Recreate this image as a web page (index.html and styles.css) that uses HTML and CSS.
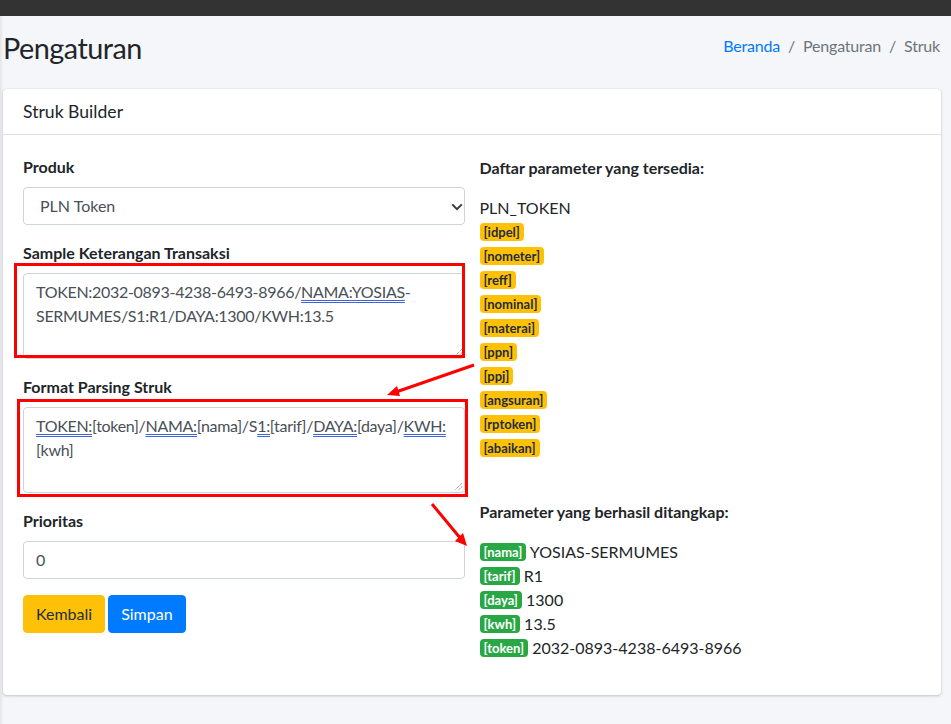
FILE: index.html
```html
<!DOCTYPE html>
<html lang="id">
<head>
<meta charset="utf-8">
<title>Pengaturan - Struk Builder</title>
<link rel="stylesheet" href="styles.css">
</head>
<body>
<div class="topbar"></div>
<div class="content-header">
  <h1 class="page-title">Pengaturan</h1>
  <ol class="breadcrumb">
    <li class="crumb"><a href="#" class="crumb-link">Beranda</a></li>
    <li class="crumb crumb-sep">Pengaturan</li>
    <li class="crumb crumb-sep">Struk</li>
  </ol>
</div>

<div class="card">
  <div class="card-header">
    <h3 class="card-title">Struk Builder</h3>
  </div>
  <div class="card-body">
    <div class="form-col">
      <div class="form-group">
        <label class="form-label">Produk</label>
        <div class="select-wrap">
          <select class="form-control select">
            <option>PLN Token</option>
          </select>
          <svg class="select-caret" width="12" height="8" viewBox="0 0 12 8"><path d="M1.2 1.4 L6 6.2 L10.8 1.4" fill="none" stroke="#3a3a3a" stroke-width="2"/></svg>
        </div>
      </div>
      <div class="form-group">
        <label class="form-label">Sample Keterangan Transaksi</label>
        <div class="form-control textarea">TOKEN:2032-0893-4238-6493-8966/<span class="sp">NAMA:YOSIAS</span>-<br>SERMUMES/S1:R1/DAYA:1300/KWH:13.5<svg class="grip" width="9" height="9" viewBox="0 0 9 9"><path d="M8 1 L1 8 M8 4.5 L4.5 8" stroke="#8a8a8a" stroke-width="1" stroke-dasharray="1.2 0.8"/></svg></div>
      </div>
      <div class="form-group">
        <label class="form-label">Format Parsing Struk</label>
        <div class="form-control textarea"><span class="sp">TOKEN:[</span>token]/<span class="sp">NAMA:[</span>nama]/S<span class="sp">1:[</span>tarif]/<span class="sp">DAYA:[</span>daya]/<span class="sp">KWH:</span><br><span class="sp">[</span>kwh]<svg class="grip" width="9" height="9" viewBox="0 0 9 9"><path d="M8 1 L1 8 M8 4.5 L4.5 8" stroke="#8a8a8a" stroke-width="1" stroke-dasharray="1.2 0.8"/></svg></div>
      </div>
      <div class="form-group">
        <label class="form-label">Prioritas</label>
        <input class="form-control input" type="text" value="0">
      </div>
      <div class="actions">
        <button class="btn btn-warning">Kembali</button>
        <button class="btn btn-primary">Simpan</button>
      </div>
    </div>

    <div class="param-col">
      <div class="param-title">Daftar parameter yang tersedia:</div>
      <div class="param-line">PLN_TOKEN</div>
      <div class="param-line"><span class="badge badge-warning">[idpel]</span></div>
      <div class="param-line"><span class="badge badge-warning">[nometer]</span></div>
      <div class="param-line"><span class="badge badge-warning">[reff]</span></div>
      <div class="param-line"><span class="badge badge-warning">[nominal]</span></div>
      <div class="param-line"><span class="badge badge-warning">[materai]</span></div>
      <div class="param-line"><span class="badge badge-warning">[ppn]</span></div>
      <div class="param-line"><span class="badge badge-warning">[ppj]</span></div>
      <div class="param-line"><span class="badge badge-warning">[angsuran]</span></div>
      <div class="param-line"><span class="badge badge-warning">[rptoken]</span></div>
      <div class="param-line"><span class="badge badge-warning">[abaikan]</span></div>

      <div class="param-title param-title-2">Parameter yang berhasil ditangkap:</div>
      <div class="param-line"><span class="badge badge-success">[nama]</span> YOSIAS-SERMUMES</div>
      <div class="param-line"><span class="badge badge-success">[tarif]</span> R1</div>
      <div class="param-line"><span class="badge badge-success">[daya]</span> 1300</div>
      <div class="param-line"><span class="badge badge-success">[kwh]</span> 13.5</div>
      <div class="param-line"><span class="badge badge-success">[token]</span> 2032-0893-4238-6493-8966</div>
    </div>
  </div>
</div>

<div class="mark mark-1"></div>
<div class="mark mark-2"></div>
<svg class="annot" width="951" height="724" viewBox="0 0 951 724">
  <line x1="474" y1="365" x2="396" y2="392" stroke="#f00" stroke-width="3"/>
  <polygon points="387,395 400,396 397,386" fill="#f00"/>
  <line x1="432" y1="504" x2="461" y2="539" stroke="#f00" stroke-width="3"/>
  <polygon points="467,546 455,541 463,533" fill="#f00"/>
</svg>
</body>
</html>
```

FILE: styles.css
```css
* { box-sizing: border-box; }

html, body { margin: 0; padding: 0; }

body {
  width: 951px;
  min-height: 724px;
  background: linear-gradient(to right, #e2e4e7 0, #eef0f3 2px, #f4f6f9 4px) #f4f6f9;
  font-family: Lato, "Open Sans", sans-serif;
  font-size: 16px;
  line-height: 1.5;
  color: #212529;
  position: relative;
  overflow: hidden;
}

.topbar {
  height: 16px;
  background: #333333;
}

.content-header {
  display: flex;
  justify-content: space-between;
  align-items: center;
  padding: 15px 11px 23px 3px;
}

.page-title {
  margin: 0;
  font-size: 28.8px;
  font-weight: 400;
  line-height: 1.2;
  letter-spacing: -0.5px;
  color: #212529;
}

.breadcrumb {
  display: flex;
  list-style: none;
  margin: 0 0 4px;
  padding: 0;
  font-size: 16px;
  line-height: 1.5;
  letter-spacing: -0.2px;
}

.crumb { color: #6c757d; }

.crumb-sep::before {
  content: "/";
  padding: 0 8px;
  color: #6c757d;
}

.crumb-link {
  color: #007bff;
  text-decoration: none;
}

.card {
  margin: 0 10px 0 3px;
  background: #fff;
  border-radius: 4px;
  box-shadow: 0 0 1px rgba(0,0,0,.125), 0 1px 3px rgba(0,0,0,.2);
}

.card-header {
  padding: 12px 20px;
  border-bottom: 1px solid rgba(0,0,0,.125);
}

.card-title {
  margin: 0;
  font-size: 17.6px;
  font-weight: 400;
  line-height: 1.2;
  color: #212529;
}

.card-body {
  display: grid;
  grid-template-columns: minmax(0, 1fr) minmax(0, 1fr);
  column-gap: 15px;
  padding: 20px 20px 35px;
}

.form-group { margin-bottom: 16px; }

.form-label {
  display: block;
  margin-bottom: 8px;
  font-weight: 700;
  line-height: 24px;
}

.form-control {
  display: block;
  width: 100%;
  border: 1px solid #ced4da;
  border-radius: 4px;
  background: #fff;
  color: #495057;
  font-family: inherit;
  font-size: 16px;
  line-height: 1.5;
}

.select-wrap { position: relative; }

.select {
  height: 38px;
  padding: 6px 12px 6px 16px;
  appearance: none;
  -webkit-appearance: none;
}

.select-caret {
  position: absolute;
  right: 2px;
  top: 16px;
}

.textarea {
  position: relative;
  height: 86px;
  padding: 6px 12px;
  white-space: nowrap;
  overflow: hidden;
  letter-spacing: -0.3px;
}

.sp {
  text-decoration: underline double #3f63d6;
  text-decoration-thickness: 1px;
  text-underline-offset: 2px;
}

.grip {
  position: absolute;
  right: 1px;
  bottom: 1px;
}

.input {
  height: 38px;
  padding: 6px 12px;
}

.actions {
  display: flex;
  gap: 3px;
}

.btn {
  font-family: inherit;
  font-size: 16px;
  line-height: 1.5;
  padding: 6px 12px;
  border: 1px solid transparent;
  border-radius: 4px;
}

.btn-warning {
  background: #ffc107;
  border-color: #ffc107;
  color: #1f2d3d;
}

.btn-primary {
  background: #007bff;
  border-color: #007bff;
  color: #fff;
}

.param-col { padding-top: 1px; }

.param-title {
  font-weight: 700;
  line-height: 24px;
  margin-bottom: 16px;
}

.param-title-2 { margin-top: 40px; }

.param-line {
  line-height: 24px;
  height: 24px;
}

.badge {
  display: inline-block;
  padding: 3px 4px;
  font-size: 13px;
  font-weight: 700;
  line-height: 12px;
  border-radius: 4px;
  vertical-align: 1px;
}

.badge-warning {
  background: #ffc107;
  color: #1f2d3d;
}

.badge-success {
  background: #28a745;
  color: #fff;
}

.mark {
  position: absolute;
  border: 3px solid #f00;
  pointer-events: none;
}

.mark-1 { left: 14px; top: 263px; width: 451px; height: 95px; }
.mark-2 { left: 17px; top: 399px; width: 451px; height: 98px; }

.annot {
  position: absolute;
  left: 0;
  top: 0;
  pointer-events: none;
}
```
